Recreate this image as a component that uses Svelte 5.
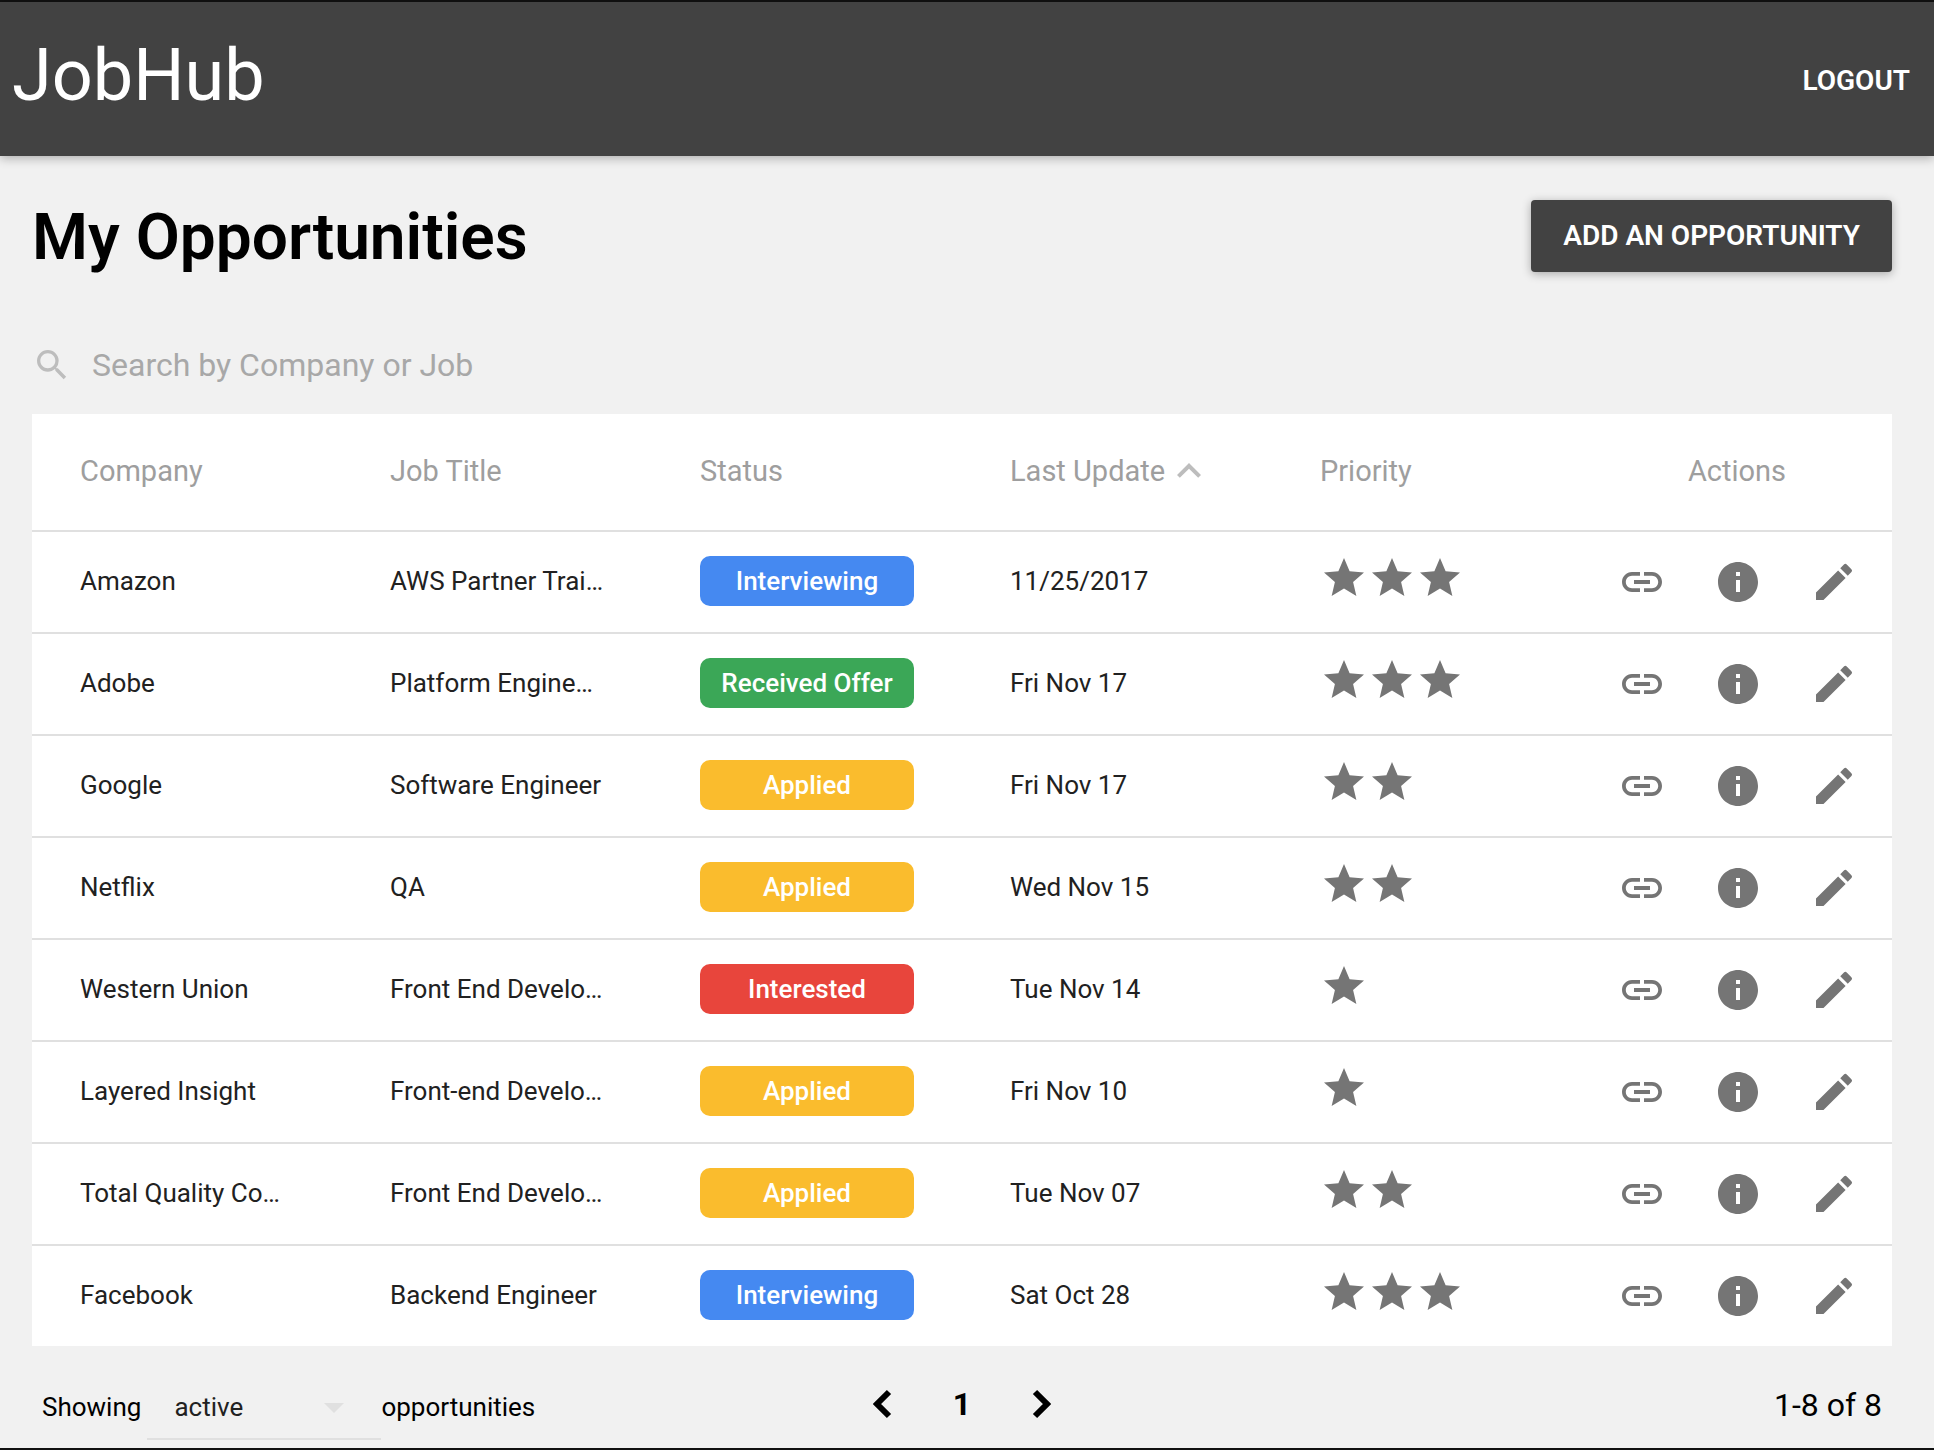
<script>
  const columns = ['Company', 'Job Title', 'Status', 'Last Update', 'Priority', 'Actions'];

  const opportunities = [
    { company: 'Amazon', title: 'AWS Partner Trainer', status: 'Interviewing', updated: '11/25/2017', priority: 3 },
    { company: 'Adobe', title: 'Platform Engineering', status: 'Received Offer', updated: 'Fri Nov 17', priority: 3 },
    { company: 'Google', title: 'Software Engineer', status: 'Applied', updated: 'Fri Nov 17', priority: 2 },
    { company: 'Netflix', title: 'QA', status: 'Applied', updated: 'Wed Nov 15', priority: 2 },
    { company: 'Western Union', title: 'Front End Developer', status: 'Interested', updated: 'Tue Nov 14', priority: 1 },
    { company: 'Layered Insight', title: 'Front-end Developer', status: 'Applied', updated: 'Fri Nov 10', priority: 1 },
    { company: 'Total Quality Company', title: 'Front End Developer', status: 'Applied', updated: 'Tue Nov 07', priority: 2 },
    { company: 'Facebook', title: 'Backend Engineer', status: 'Interviewing', updated: 'Sat Oct 28', priority: 3 }
  ];

  const slug = (status) => status.toLowerCase().replace(' ', '-');

  let query = $state('');
  let shown = $state('active');

  const rows = $derived(
    opportunities.filter((o) => (o.company + ' ' + o.title).toLowerCase().includes(query.toLowerCase()))
  );
</script>

<div class="page">
  <header class="topbar">
    <a class="brand" href="#home">JobHub</a>
    <button class="logout" type="button">LOGOUT</button>
  </header>

  <main>
    <div class="heading">
      <h1>My Opportunities</h1>
      <button class="add" type="button">ADD AN OPPORTUNITY</button>
    </div>

    <label class="search">
      <svg viewBox="0 0 24 24" aria-hidden="true">
        <path d="M15.5 14h-.79l-.28-.27A6.471 6.471 0 0 0 16 9.5 6.5 6.5 0 1 0 9.5 16c1.61 0 3.09-.59 4.23-1.57l.27.28v.79l5 4.99L20.49 19l-4.99-5zm-6 0C7.01 14 5 11.99 5 9.5S7.01 5 9.5 5 14 7.01 14 9.5 11.99 14 9.5 14z" />
      </svg>
      <input type="text" placeholder="Search by Company or Job" aria-label="Search by Company or Job" bind:value={query} />
    </label>

    <table>
      <thead>
        <tr>
          {#each columns as column}
            <th scope="col" class:centered={column === 'Actions'}>
              {#if column === 'Last Update'}
                <span class="sorted">
                  {column}
                  <svg viewBox="0 0 24 24" aria-hidden="true"><path d="M12 8l-6 6 1.41 1.41L12 10.83l4.59 4.58L18 14z" /></svg>
                </span>
              {:else}
                {column}
              {/if}
            </th>
          {/each}
        </tr>
      </thead>
      <tbody>
        {#each rows as row}
          <tr>
            <td>{row.company}</td>
            <td>{row.title}</td>
            <td><span class="status {slug(row.status)}">{row.status}</span></td>
            <td>{row.updated}</td>
            <td>
              <span class="stars">
                {#each Array(row.priority) as _}
                  <svg viewBox="0 0 24 24" aria-hidden="true"><path d="M12 17.27L18.18 21l-1.64-7.03L22 9.24l-7.19-.61L12 2 9.19 8.63 2 9.24l5.46 4.73L5.82 21z" /></svg>
                {/each}
              </span>
            </td>
            <td class="action-cell">
              <div class="actions">
                <button type="button" aria-label="Open link">
                  <svg viewBox="0 0 24 24"><path d="M3.9 12c0-1.71 1.39-3.1 3.1-3.1h4V7H7c-2.76 0-5 2.24-5 5s2.24 5 5 5h4v-1.9H7c-1.71 0-3.1-1.39-3.1-3.1zM8 13h8v-2H8v2zm9-6h-4v1.9h4c1.71 0 3.1 1.39 3.1 3.1s-1.39 3.1-3.1 3.1h-4V17h4c2.76 0 5-2.24 5-5s-2.24-5-5-5z" /></svg>
                </button>
                <button type="button" aria-label="Details">
                  <svg viewBox="0 0 24 24"><path d="M12 2C6.48 2 2 6.48 2 12s4.48 10 10 10 10-4.48 10-10S17.52 2 12 2zm1 15h-2v-6h2v6zm0-8h-2V7h2v2z" /></svg>
                </button>
                <button type="button" aria-label="Edit">
                  <svg viewBox="0 0 24 24"><path d="M3 17.25V21h3.75L17.81 9.94l-3.75-3.75L3 17.25zM20.71 7.04a.996.996 0 0 0 0-1.41l-2.34-2.34a.996.996 0 0 0-1.41 0l-1.83 1.83 3.75 3.75 1.83-1.83z" /></svg>
                </button>
              </div>
            </td>
          </tr>
        {/each}
      </tbody>
    </table>

    <footer>
      <div class="filter">
        <span>Showing</span>
        <div class="select">
          <select aria-label="Which opportunities to show" bind:value={shown}>
            <option value="active">active</option>
            <option value="archived">archived</option>
            <option value="all">all</option>
          </select>
          <svg viewBox="0 0 20 10" aria-hidden="true"><path d="M0 0h20L10 10z" /></svg>
        </div>
        <span>opportunities</span>
      </div>

      <nav aria-label="Pages">
        <button type="button" aria-label="Previous page">
          <svg viewBox="0 0 20 30"><path d="M16 3L4 15l12 12" /></svg>
        </button>
        <strong>1</strong>
        <button type="button" aria-label="Next page">
          <svg viewBox="0 0 20 30"><path d="M4 3l12 12L4 27" /></svg>
        </button>
      </nav>

      <span class="range">1-8 of 8</span>
    </footer>
  </main>
</div>

<style>
  :global(body) {
    margin: 0;
    background: #f1f1f1;
    font-family: Roboto, 'Liberation Sans', sans-serif;
  }

  .page {
    box-sizing: border-box;
    min-height: 100vh;
    border-top: 2px solid #111;
    border-bottom: 2px solid #111;
    color: #000;
  }

  button,
  input,
  select {
    margin: 0;
    padding: 0;
    border: 0;
    background: none;
    color: inherit;
    font: inherit;
  }

  button {
    cursor: pointer;
  }

  .topbar {
    display: flex;
    justify-content: space-between;
    align-items: center;
    height: 154px;
    padding: 0 24px 0 12px;
    background: #424242;
    color: #fff;
    box-shadow: 0 2px 10px rgba(0, 0, 0, 0.3);
  }

  .brand {
    padding-bottom: 6px;
    color: inherit;
    font-size: 72px;
    line-height: 84px;
    text-decoration: none;
  }

  .logout,
  .add {
    font-size: 28px;
    font-weight: 600;
    line-height: 36px;
  }

  .logout {
    padding-top: 4px;
  }

  main {
    padding: 44px 42px 0 32px;
  }

  .heading {
    display: flex;
    justify-content: space-between;
    align-items: center;
    height: 72px;
  }

  h1 {
    margin: 0;
    padding-top: 4px;
    font-size: 64px;
    font-weight: 600;
    line-height: 72px;
  }

  .add {
    height: 72px;
    padding: 0 32px;
    border-radius: 4px;
    background: #424242;
    color: #fff;
    box-shadow: 0 2px 10px rgba(0, 0, 0, 0.3);
  }

  .search {
    display: flex;
    align-items: center;
    gap: 20px;
    height: 98px;
    padding-top: 44px;
  }

  .search svg {
    width: 40px;
    height: 40px;
    fill: #bdbdbd;
  }

  .search input {
    flex: 1;
    outline: 0;
    font-size: 32px;
    line-height: 40px;
  }

  .search input::placeholder {
    color: #a8a8a8;
    opacity: 1;
  }

  table {
    width: 100%;
    border-spacing: 0;
    table-layout: fixed;
    background: #fff;
  }

  th,
  td {
    box-sizing: border-box;
    padding: 0 48px;
    overflow: hidden;
    text-align: left;
    text-overflow: ellipsis;
    white-space: nowrap;
  }

  th {
    height: 118px;
    padding-bottom: 3px;
    border-bottom: 2px solid #e0e0e0;
    color: #9e9e9e;
    font-size: 29px;
    font-weight: 400;
  }

  th.centered {
    text-align: center;
  }

  .sorted {
    display: flex;
    align-items: center;
  }

  .sorted svg {
    width: 48px;
    height: 48px;
    fill: #bdbdbd;
  }

  td {
    height: 102px;
    padding-bottom: 2px;
    border-bottom: 2px solid #e0e0e0;
    color: #212121;
    font-size: 26px;
  }

  tbody tr:last-child td {
    height: 100px;
    border-bottom: 0;
  }

  .status {
    display: block;
    border-radius: 10px;
    color: #fff;
    font-weight: 500;
    line-height: 50px;
    text-align: center;
  }

  .interviewing {
    background: #4589f1;
  }

  .received-offer {
    background: #3ba757;
  }

  .applied {
    background: #fabc2d;
  }

  .interested {
    background: #e8453c;
  }

  .stars {
    display: flex;
    padding-bottom: 6px;
  }

  .stars svg,
  .actions svg {
    display: block;
    width: 48px;
    height: 48px;
    fill: #757575;
  }

  td.action-cell {
    padding: 0 0 0 12px;
  }

  .actions {
    display: flex;
  }

  .actions button {
    display: flex;
    justify-content: center;
    align-items: center;
    width: 96px;
    height: 96px;
  }

  footer {
    display: grid;
    grid-template-columns: 1fr auto 1fr;
    align-items: center;
    height: 100px;
    padding: 0 10px;
  }

  .filter {
    display: flex;
    align-items: center;
    padding-top: 22px;
    font-size: 26px;
    line-height: 32px;
  }

  .select {
    display: grid;
    grid-template-columns: 1fr auto;
    align-items: center;
    width: 234px;
    margin-left: 6px;
    box-sizing: border-box;
    border-bottom: 2px solid #e0e0e0;
  }

  .select select {
    grid-area: 1 / 1 / 2 / 3;
    box-sizing: border-box;
    height: 64px;
    padding: 2px 60px 0 27px;
    outline: 0;
    appearance: none;
    color: #212121;
  }

  .select svg {
    grid-area: 1 / 2;
    width: 20px;
    height: 10px;
    margin: 4px 37px 0 0;
    fill: #e0e0e0;
    pointer-events: none;
  }

  nav {
    display: flex;
    align-items: center;
    gap: 60px;
    padding-top: 16px;
  }

  nav button {
    display: flex;
  }

  nav svg {
    width: 20px;
    height: 30px;
    fill: none;
    stroke: #000;
    stroke-width: 6;
  }

  nav strong {
    font-size: 32px;
    line-height: 40px;
  }

  .range {
    padding-top: 17px;
    font-size: 32px;
    line-height: 40px;
    text-align: right;
  }
</style>
